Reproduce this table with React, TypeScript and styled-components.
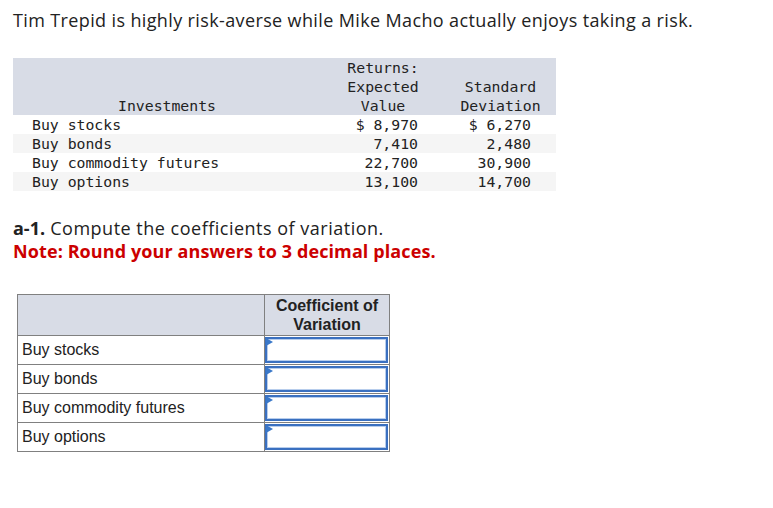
import { createGlobalStyle, styled } from 'styled-components';

const GlobalStyle = createGlobalStyle`
  body {
    margin: 0;
    background: #fff;
    color: #222;
    font-family: 'Open Sans', 'Lato', sans-serif;
  }
`;

const Page = styled.div`
  padding: 8px 13px 0 13px;
`;

const Intro = styled.p`
  margin: 0;
  font-size: 18px;
  line-height: 24px;
  letter-spacing: 0.37px;
  color: #222;
`;

const DataTable = styled.div`
  display: grid;
  grid-template-columns: 308px 124px 111px;
  margin-top: 26px;
  font-family: 'DejaVu Sans Mono', 'Liberation Mono', monospace;
  font-size: 14.8px;
  line-height: 19px;
  color: #222;
`;

const HeadCell = styled.div`
  background: #d8dce6;
  text-align: center;
  display: flex;
  flex-direction: column;
  justify-content: flex-end;
  height: 57px;
`;

const Cell = styled.div<{ $shade?: boolean; $right?: number }>`
  background: ${(p) => (p.$shade ? '#f5f5f5' : '#fff')};
  height: 19px;
  white-space: pre;
  text-align: ${(p) => (p.$right !== undefined ? 'right' : 'left')};
  padding: ${(p) => (p.$right !== undefined ? `0 ${p.$right}px 0 0` : '0 0 0 19px')};
`;

const Question = styled.div`
  margin-top: 26px;
  font-size: 18px;
  line-height: 23px;
  letter-spacing: 0.5px;
  b {
    font-weight: 700;
    letter-spacing: 0;
  }
`;

const Note = styled.div`
  color: #c00;
  font-weight: 700;
  letter-spacing: 0.1px;
`;

const AnswerTable = styled.table`
  margin: 31px 0 0 4px;
  border-collapse: collapse;
  font-family: 'Liberation Sans', Arial, sans-serif;
  font-size: 16px;
  color: #222;
  td,
  th {
    border: 1px solid #808080;
    padding: 0;
  }
`;

const TopHead = styled.th<{ $w: number }>`
  background: #d8dce6;
  width: ${(p) => p.$w}px;
  height: 41px;
  box-sizing: border-box;
  font-weight: 700;
  line-height: 19px;
  text-align: center;
  vertical-align: top;
  padding-top: 1px !important;
`;

const Label = styled.td`
  height: 28px;
  padding: 0 0 0 4px !important;
  text-align: left;
`;

const InputCell = styled.td`
  position: relative;
`;

const Entry = styled.div`
  position: relative;
  height: 26px;
  margin: 0 1px 1px 0;
  border: 2px solid #3a70c0;
  box-shadow: inset 0 0 0 1px #b7cdec;
  box-sizing: border-box;
  background: #fff;
  &::before {
    content: '';
    position: absolute;
    left: -1px;
    top: -1px;
    border-top: 4px solid transparent;
    border-bottom: 4px solid transparent;
    border-left: 7px solid #3a78c9;
  }
`;

const rows = [
  ['Buy stocks', '$ 8,970', '$ 6,270'],
  ['Buy bonds', '7,410', '2,480'],
  ['Buy commodity futures', '22,700', '30,900'],
  ['Buy options', '13,100', '14,700'],
];

export default function App() {
  return (
    <>
      <GlobalStyle />
      <Page>
        <Intro>Tim Trepid is highly risk-averse while Mike Macho actually enjoys taking a risk.</Intro>
        <DataTable>
          <HeadCell>
            <span>Investments</span>
          </HeadCell>
          <HeadCell>
            <span>Returns:</span>
            <span>Expected</span>
            <span>Value</span>
          </HeadCell>
          <HeadCell>
            <span>Standard</span>
            <span>Deviation</span>
          </HeadCell>
          {rows.map((r, i) => (
            <>
              <Cell key={r[0]} $shade={i % 2 === 1}>
                {r[0]}
              </Cell>
              <Cell key={r[0] + 'e'} $shade={i % 2 === 1} $right={27}>
                {r[1]}
              </Cell>
              <Cell key={r[0] + 's'} $shade={i % 2 === 1} $right={25}>
                {r[2]}
              </Cell>
            </>
          ))}
        </DataTable>
        <Question>
          <b>a-1.</b> Compute the coefficients of variation.
          <Note>Note: Round your answers to 3 decimal places.</Note>
        </Question>
        <AnswerTable>
          <thead>
            <tr>
              <TopHead $w={247}></TopHead>
              <TopHead $w={125}>
                Coefficient of
                <br />
                Variation
              </TopHead>
            </tr>
          </thead>
          <tbody>
            {rows.map((r) => (
              <tr key={r[0]}>
                <Label>{r[0]}</Label>
                <InputCell>
                  <Entry />
                </InputCell>
              </tr>
            ))}
          </tbody>
        </AnswerTable>
      </Page>
    </>
  );
}
